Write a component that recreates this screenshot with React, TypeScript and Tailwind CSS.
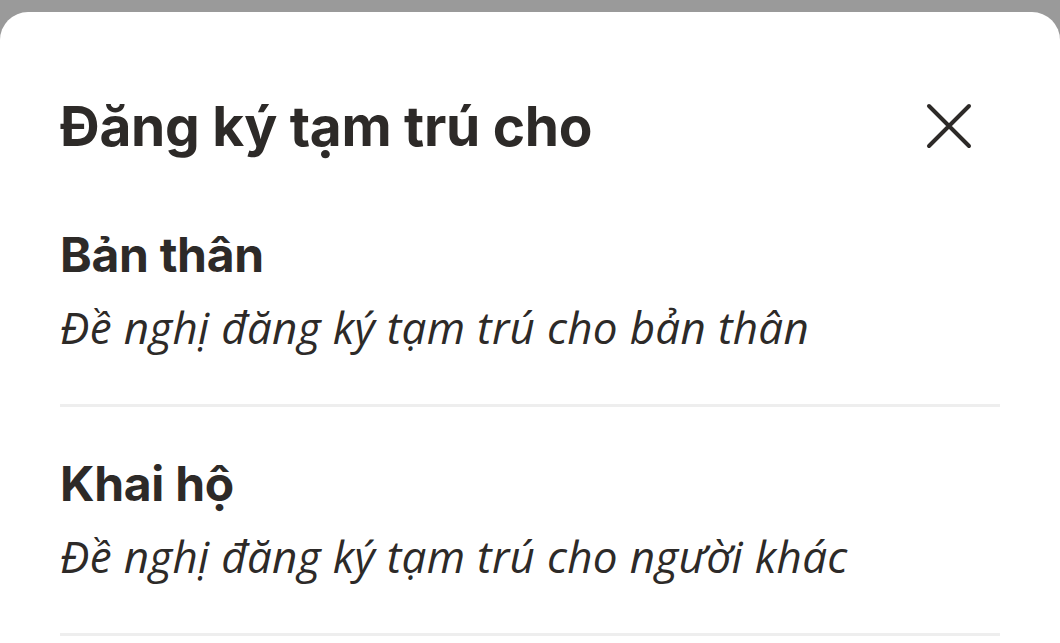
const options = [
  { title: 'Bản thân', desc: 'Đề nghị đăng ký tạm trú cho bản thân' },
  { title: 'Khai hộ', desc: 'Đề nghị đăng ký tạm trú cho người khác' },
]

function CloseIcon() {
  return (
    <svg className="h-[46px] w-[46px]" viewBox="0 0 46 46" fill="none" aria-hidden>
      <path d="M3 3L43 43M43 3L3 43" stroke="currentColor" strokeWidth="4" strokeLinecap="round" />
    </svg>
  )
}

export default function App() {
  return (
    <div className="h-[643px] w-full overflow-hidden bg-[#9a9a9a] pt-[12px] text-[#2d2a28]">
      <div className="h-full rounded-t-[28px] bg-white px-[60px]">
        <div className="flex items-center justify-between pt-[86px]">
          <h1 className="font-['Inter',sans-serif] text-[55px] font-bold leading-[56px] tracking-[-0.3px]">
            Đăng ký tạm trú cho
          </h1>
          <button className="mr-[28px] flex h-[46px] w-[46px] items-center justify-center" aria-label="Đóng">
            <CloseIcon />
          </button>
        </div>

        <div className="mt-[73px]">
          {options.map((o, i) => (
            <div key={o.title} className={`border-b-[3px] border-[#eeeeee] pb-[53px] ${i > 0 ? 'pt-[49px]' : ''}`}>
              <p className="font-['Inter',sans-serif] text-[48px] font-bold leading-[56px] tracking-[-0.3px]">{o.title}</p>
              <p className="mt-[20px] font-['Open_Sans',sans-serif] text-[44px] italic leading-[48px] tracking-[0.3px]">
                {o.desc}
              </p>
            </div>
          ))}
        </div>
      </div>
    </div>
  )
}
